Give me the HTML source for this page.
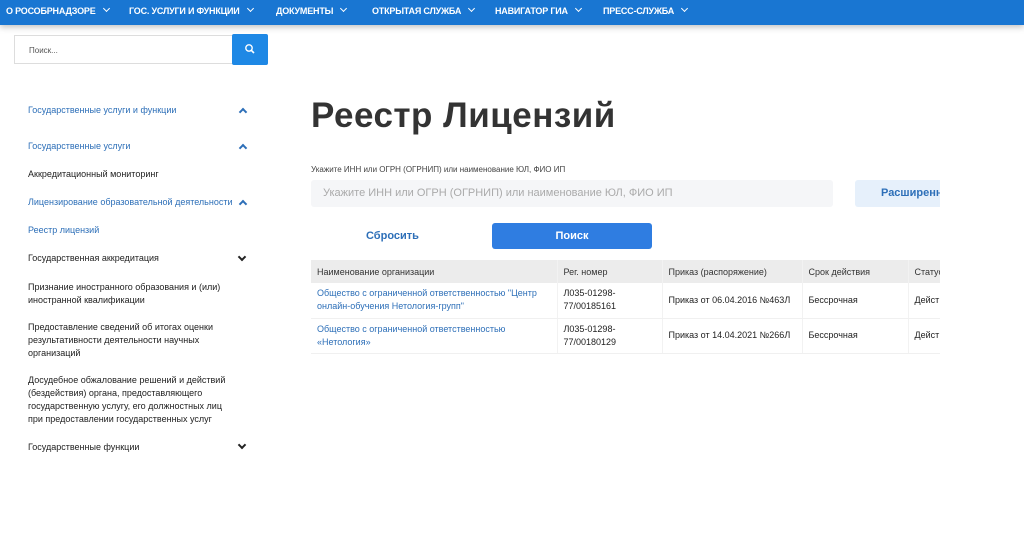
<!DOCTYPE html>
<html><head><meta charset="utf-8"><style>
*{margin:0;padding:0;box-sizing:border-box}
body{width:1024px;height:546px;background:#fff;font-family:"Liberation Sans","DejaVu Sans",sans-serif;position:relative;overflow:hidden;color:#222}
.nav{position:absolute;left:0;top:0;width:1024px;height:25px;background:#1976d2;box-shadow:0 2px 6px rgba(0,0,0,.25)}
.nav span{position:absolute;top:6px;color:#fff;font-size:9px;font-weight:bold;letter-spacing:-.2px;white-space:nowrap}
.nav span:after{content:"";display:inline-block;width:4px;height:4px;border-right:1.5px solid #fff;border-bottom:1.5px solid #fff;transform:rotate(45deg);margin-left:8px;position:relative;top:-3px}
.abs{position:absolute;white-space:nowrap}
.srch{position:absolute;left:14px;top:35px;width:219px;height:29px;border:1px solid #ddd;border-right:none;font-size:8px;color:#555;padding:10px 0 0 14px}
.sbtn{position:absolute;left:232px;top:34px;width:36px;height:31px;background:#1e88e5;border-radius:2px}
.side{font-size:9px;color:#222}
.side.b{color:#2d6fb8}
.chev{position:absolute;width:6px;height:6px;border-right:2px solid #222;border-bottom:2px solid #222}
.up{transform:rotate(-135deg);border-color:#2d6fb8}
.dn{transform:rotate(45deg)}
table{position:absolute;left:311px;top:260px;width:629px;border-collapse:collapse;font-size:9px;table-layout:fixed}
td{padding:0 6px;vertical-align:middle;overflow:hidden;white-space:nowrap}
tr.h td{background:#ececec;height:23px;color:#333}
tr.r td{height:35px;border-bottom:1px solid #f0f0f0;line-height:13px}
td.l{color:#2d6fb8;white-space:normal}
td+td{border-left:1px solid #f2f2f2}
</style></head><body>
<div class="nav">
<span style="left:6px">О РОСОБРНАДЗОРЕ</span>
<span style="left:129px">ГОС. УСЛУГИ И ФУНКЦИИ</span>
<span style="left:276px">ДОКУМЕНТЫ</span>
<span style="left:372px">ОТКРЫТАЯ СЛУЖБА</span>
<span style="left:495px">НАВИГАТОР ГИА</span>
<span style="left:603px">ПРЕСС-СЛУЖБА</span>
</div>
<div class="srch">Поиск...</div>
<div class="sbtn"><svg width="36" height="31" viewBox="0 0 36 31"><circle cx="17" cy="14" r="3.2" fill="none" stroke="#fff" stroke-width="1.4"/><line x1="19.3" y1="16.3" x2="22" y2="19" stroke="#fff" stroke-width="1.6"/></svg></div>

<div class="abs side b" style="left:28px;top:105px">Государственные услуги и функции</div><div class="chev up" style="left:240px;top:109px"></div>
<div class="abs side b" style="left:28px;top:141px">Государственные услуги</div><div class="chev up" style="left:240px;top:145px"></div>
<div class="abs side" style="left:28px;top:169px">Аккредитационный мониторинг</div>
<div class="abs side b" style="left:28px;top:197px">Лицензирование образовательной деятельности</div><div class="chev up" style="left:240px;top:201px"></div>
<div class="abs side b" style="left:28px;top:225px">Реестр лицензий</div>
<div class="abs side" style="left:28px;top:253px">Государственная аккредитация</div><div class="chev dn" style="left:239px;top:254px"></div>
<div class="abs side" style="left:28px;top:281px;line-height:13px">Признание иностранного образования и (или)<br>иностранной квалификации</div>
<div class="abs side" style="left:28px;top:321px;line-height:13px">Предоставление сведений об итогах оценки<br>результативности деятельности научных<br>организаций</div>
<div class="abs side" style="left:28px;top:374px;line-height:13px">Досудебное обжалование решений и действий<br>(бездействия) органа, предоставляющего<br>государственную услугу, его должностных лиц<br>при предоставлении государственных услуг</div>
<div class="abs side" style="left:28px;top:442px">Государственные функции</div><div class="chev dn" style="left:239px;top:442px"></div>

<div class="abs" style="left:311px;top:96px;font-size:35px;font-weight:bold;color:#333;letter-spacing:.5px">Реестр Лицензий</div>
<div class="abs" style="left:311px;top:165px;font-size:8px;color:#444">Укажите ИНН или ОГРН (ОГРНИП) или наименование ЮЛ, ФИО ИП</div>
<div class="abs" style="left:311px;top:180px;width:522px;height:27px;background:#f5f6f8;border-radius:3px;font-size:11px;color:#aaa;padding:7px 0 0 12px">Укажите ИНН или ОГРН (ОГРНИП) или наименование ЮЛ, ФИО ИП</div>
<div class="abs" style="left:855px;top:180px;width:85px;height:27px;background:#e6f0fb;border-radius:3px 0 0 3px;font-size:11px;font-weight:bold;color:#2d6fb8;padding:7px 0 0 26px;overflow:hidden">Расширенн</div>
<div class="abs" style="left:366px;top:230px;font-size:11px;font-weight:bold;color:#2d6fb8">Сбросить</div>
<div class="abs" style="left:492px;top:223px;width:160px;height:26px;background:#2f7de1;border-radius:3px;font-size:11px;font-weight:bold;color:#fff;text-align:center;line-height:26px">Поиск</div>
<table>
<colgroup><col style="width:246px"><col style="width:105px"><col style="width:140px"><col style="width:106px"><col style="width:32px"></colgroup>
<tr class="h"><td>Наименование организации</td><td>Рег. номер</td><td>Приказ (распоряжение)</td><td>Срок действия</td><td>Статус</td></tr>
<tr class="r"><td class="l">Общество с ограниченной ответственностью "Центр онлайн-обучения Нетология-групп"</td><td>Л035-01298-<br>77/00185161</td><td>Приказ от 06.04.2016 №463Л</td><td>Бессрочная</td><td>Дейст</td></tr>
<tr class="r"><td class="l">Общество с ограниченной ответственностью<br>«Нетология»</td><td>Л035-01298-<br>77/00180129</td><td>Приказ от 14.04.2021 №266Л</td><td>Бессрочная</td><td>Дейст</td></tr>
</table>
</body></html>
